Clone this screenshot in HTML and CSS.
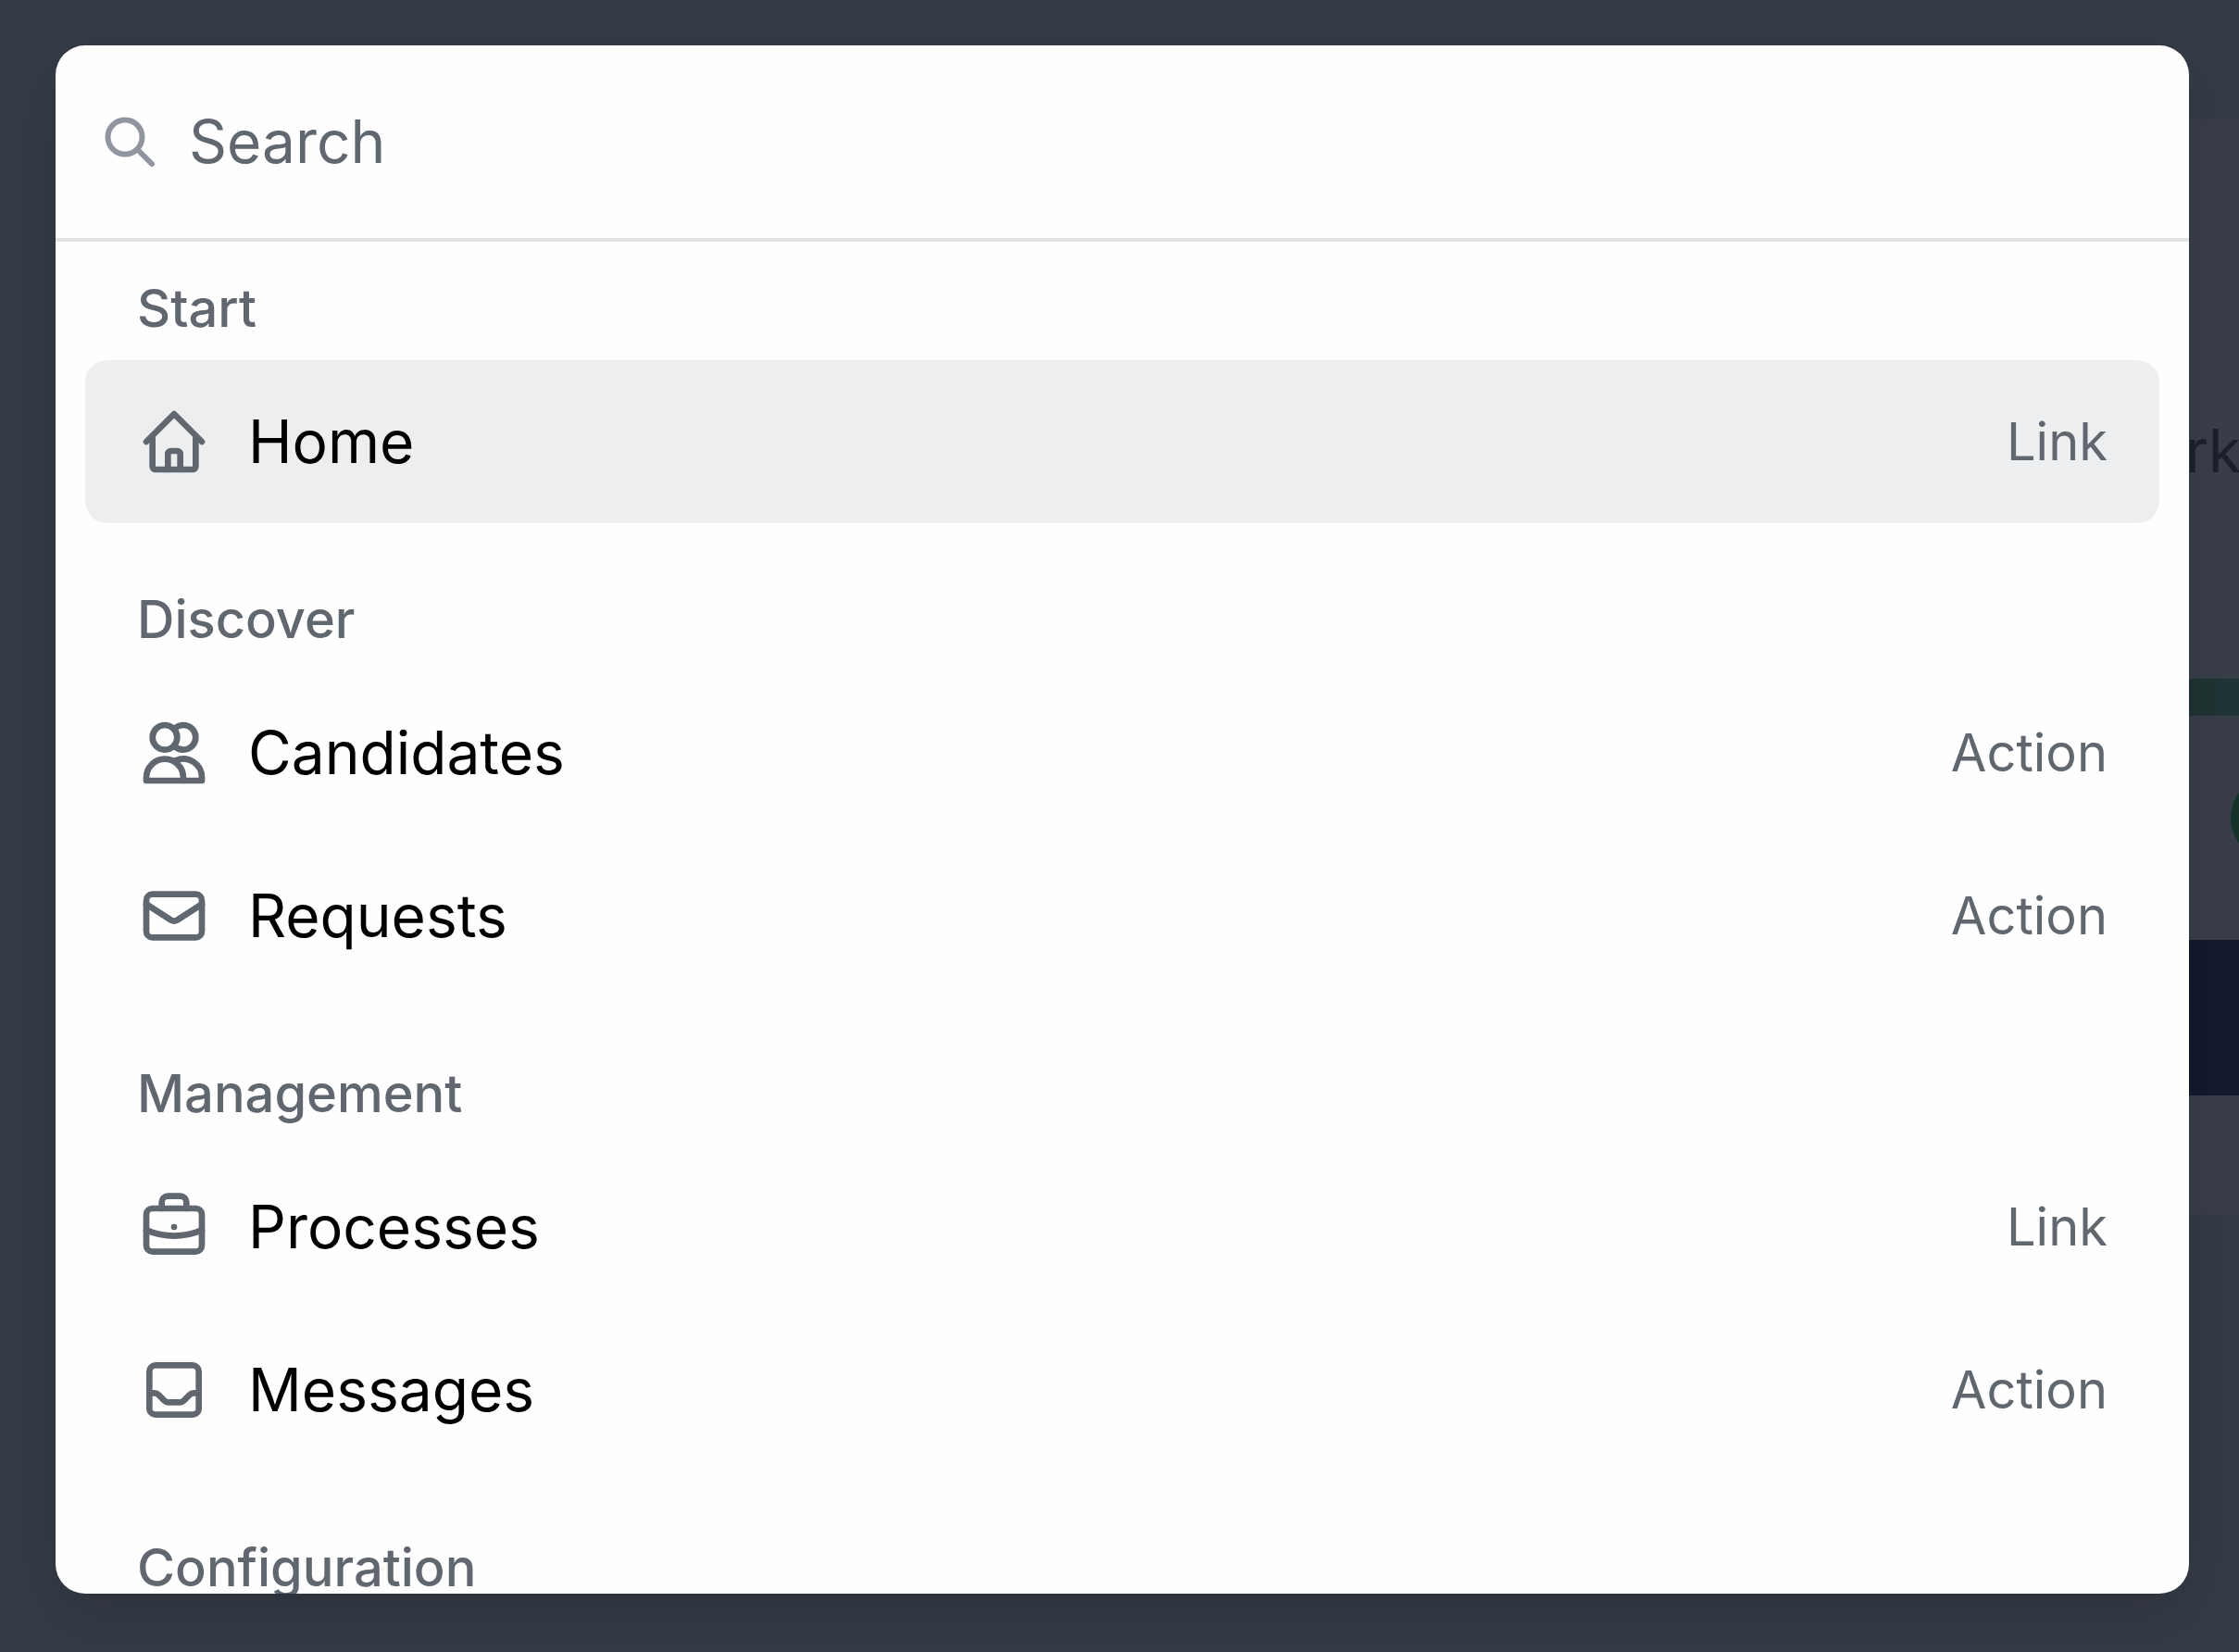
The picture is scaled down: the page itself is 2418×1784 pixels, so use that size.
FILE: index.html
```html
<!DOCTYPE html>
<html lang="en">
<head>
    <meta charset="UTF-8">
    <meta name="viewport" content="width=device-width, initial-scale=1.0">
    <title>Command Menu</title>
    <link rel="stylesheet" href="styles.css">
</head>
<body>
    <!-- Dimmed page behind the menu -->
    <div class="page" aria-hidden="true">
        <div class="page-card">
            <p class="page-title">rk</p>
            <div class="page-progress"></div>
            <div class="page-status"></div>
            <div class="page-button"></div>
        </div>
    </div>

    <div class="menu" role="dialog" aria-label="Command menu">
        <div class="menu-header">
            <svg class="search-icon" viewBox="0 0 64 64">
                <circle cx="27" cy="27" r="18.5"/>
                <path d="M40.5 40.5L56 56"/>
            </svg>
            <input class="search-input" type="text" placeholder="Search" aria-label="Search">
        </div>

        <div class="menu-list">
            <section class="group">
                <h2 class="group-title">Start</h2>
                <a class="item selected" href="#home">
                    <svg class="icon" viewBox="0 0 24 24">
                        <path d="M3 12l9-9 9 9"/>
                        <path d="M5 10.5V20a1 1 0 0 0 1 1h12a1 1 0 0 0 1-1v-9.5"/>
                        <path d="M10 21v-5a1 1 0 0 1 1-1h2a1 1 0 0 1 1 1v5"/>
                    </svg>
                    <span class="item-name">Home</span>
                    <span class="item-type">Link</span>
                </a>
            </section>

            <section class="group">
                <h2 class="group-title">Discover</h2>
                <button class="item" type="button">
                    <svg class="icon" viewBox="0 0 24 24">
                        <circle cx="9" cy="7" r="4"/>
                        <path d="M12 4.35a4 4 0 1 1 0 5.3"/>
                        <path d="M3 21v-1a6 6 0 0 1 12 0v1z"/>
                        <path d="M12.5 14.5A6 6 0 0 1 21 20v1h-6"/>
                    </svg>
                    <span class="item-name">Candidates</span>
                    <span class="item-type">Action</span>
                </button>
                <button class="item" type="button">
                    <svg class="icon" viewBox="0 0 24 24">
                        <rect x="3" y="5" width="18" height="14" rx="2"/>
                        <path d="M3 8.2l8 5.2a2 2 0 0 0 2 0l8-5.2"/>
                    </svg>
                    <span class="item-name">Requests</span>
                    <span class="item-type">Action</span>
                </button>
            </section>

            <section class="group">
                <h2 class="group-title">Management</h2>
                <a class="item" href="#processes">
                    <svg class="icon" viewBox="0 0 24 24">
                        <rect x="3" y="6" width="18" height="14" rx="2"/>
                        <path d="M8 6V4a2 2 0 0 1 2-2h4a2 2 0 0 1 2 2v2"/>
                        <path d="M3 13c5.7 2.5 12.3 2.5 18 0"/>
                        <circle class="icon-dot" cx="12" cy="12" r="1"/>
                    </svg>
                    <span class="item-name">Processes</span>
                    <span class="item-type">Link</span>
                </a>
                <button class="item" type="button">
                    <svg class="icon" viewBox="0 0 24 24">
                        <rect x="4" y="4" width="16" height="16" rx="2"/>
                        <path d="M4 13h1.6a2 2 0 0 1 1.4.6l1.800 1.800a2 2 0 0 0 1.400.6h3.6a2 2 0 0 0 1.400-.6l1.800-1.800a2 2 0 0 1 1.400-.6H20"/>
                    </svg>
                    <span class="item-name">Messages</span>
                    <span class="item-type">Action</span>
                </button>
            </section>

            <section class="group">
                <h2 class="group-title">Configuration</h2>
            </section>
        </div>
    </div>
</body>
</html>
```

FILE: styles.css
```css
* {
    box-sizing: border-box;
}

body {
    margin: 0;
    height: 100vh;
    padding: 49px 54px 63px 60px;
    overflow: hidden;
    background: #353b46;
    font-family: Inter, sans-serif;
}

/* Page behind, its card runs a little under the menu */
.page {
    position: fixed;
    inset: 0;
    display: flex;
    justify-content: flex-end;
    align-items: flex-start;
    padding-top: 129px;
}

.page-card {
    width: 58px;
    height: 1182px;
    padding-top: 318px;
    overflow: hidden;
    background: #393e49;
}

.page-title {
    margin: 0;
    color: #1b202b;
    font-size: 64px;
    font-weight: 400;
    line-height: 80px;
}

.page-progress {
    height: 40px;
    margin-top: 206px;
    background: #1f3434;
}

.page-status {
    width: 92px;
    height: 92px;
    margin: 64px 0 86px 49px;
    border-radius: 50%;
    background: #17342c;
}

.page-button {
    height: 168px;
    background: #15192f;
}

/* Menu */
.menu {
    position: relative;
    display: flex;
    flex-direction: column;
    height: 100%;
    overflow: hidden;
    background: #fefefe;
    border-radius: 32px;
    box-shadow: 0 24px 64px -8px rgba(0, 0, 0, 0.18);
}

.menu-header {
    display: flex;
    flex-shrink: 0;
    align-items: center;
    gap: 32px;
    height: 212px;
    padding: 0 48px;
    border-bottom: 4px solid #e1e2e4;
}

.search-icon {
    flex-shrink: 0;
    width: 64px;
    height: 64px;
    fill: none;
    stroke: #9095a0;
    stroke-width: 6;
    stroke-linecap: round;
}

.search-input {
    flex: 1;
    min-width: 0;
    padding: 0;
    border: none;
    outline: none;
    background: none;
    color: #000;
    font: 400 64px/96px Inter, sans-serif;
}

.search-input::placeholder {
    color: #60676f;
    opacity: 1;
}

.menu-list {
    flex: 1;
    display: flex;
    flex-direction: column;
    gap: 48px;
    padding: 16px 32px 0;
    overflow: hidden;
}

.group {
    flex-shrink: 0;
}

.group-title {
    margin: 0;
    padding: 16px 56px;
    color: #60676f;
    font-size: 56px;
    font-weight: 500;
    line-height: 80px;
}

.item {
    display: flex;
    align-items: center;
    gap: 40px;
    width: 100%;
    height: 176px;
    padding: 0 56px;
    border: none;
    border-radius: 24px;
    background: none;
    color: #000;
    font: 400 64px/96px Inter, sans-serif;
    text-align: left;
    text-decoration: none;
    cursor: pointer;
}

.selected {
    background: #edeef0;
}

.icon {
    flex-shrink: 0;
    width: 80px;
    height: 80px;
    fill: none;
    stroke: #60676f;
    stroke-width: 2;
    stroke-linecap: round;
    stroke-linejoin: round;
}

.icon-dot {
    fill: #60676f;
    stroke: none;
}

.item-name {
    flex: 1;
}

.item-type {
    color: #60676f;
    font-size: 56px;
}
```
